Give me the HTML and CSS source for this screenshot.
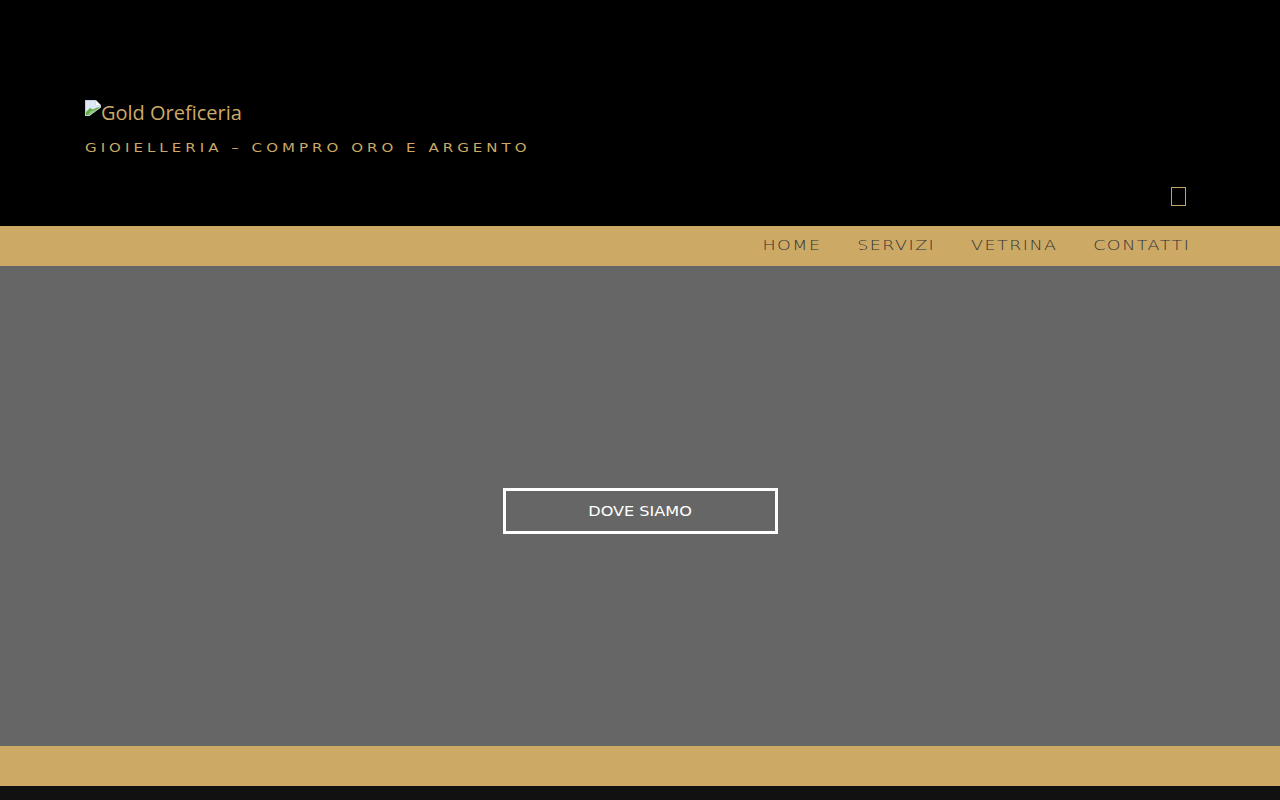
FILE: index.html
```html
<!DOCTYPE html>
<html lang="it">
<head>
<meta charset="utf-8">
<title>Gold Oreficeria</title>
<link rel="stylesheet" href="styles.css">
</head>
<body>
<header class="masthead">
  <div class="brand">
    <a class="logo" href="#">
      <svg class="broken-icon" width="16" height="16" viewBox="0 0 16 16" aria-hidden="true">
        <path d="M0 0H11L16 5V7.500L4.500 16H0Z" fill="#c3cbd8"/>
        <path d="M1 1H10.500V5.500H15V7L4 15H1Z" fill="#dfe8f8"/>
        <path d="M11 1L15 5H11Z" fill="#fff"/>
        <path d="M1 15V12L5 8L8 9.500L12 7.500L15 7L4 15Z" fill="#62ab48"/>
        <path d="M3 15L6 10.500L9 10.500L13 8.500L4 15Z" fill="#8fca76"/>
      </svg><span class="logo-text">Gold Oreficeria</span>
    </a>
    <p class="tagline">GIOIELLERIA – COMPRO ORO E ARGENTO</p>
  </div>
  <div class="tools"><span class="missing-glyph"></span></div>
</header>
<nav class="menu">
  <div class="menu-items">
    <a href="#">HOME</a>
    <a href="#">SERVIZI</a>
    <a href="#">VETRINA</a>
    <a href="#">CONTATTI</a>
  </div>
</nav>
<main class="hero">
  <a class="cta" href="#"><span class="cta-label">DOVE SIAMO</span></a>
</main>
<div class="strip"></div>
<footer class="foot"></footer>
</body>
</html>
```
FILE: styles.css
```css
* { box-sizing: border-box; }
html, body { margin: 0; padding: 0; }
body {
  background: #111;
  font-family: "DejaVu Sans", sans-serif;
  height: 800px;
  overflow: hidden;
}
a { text-decoration: none; color: inherit; }
.masthead {
  height: 226px;
  background: #000;
  padding: 100px 90px 0 85px;
  display: flex;
  flex-direction: column;
}
.logo {
  display: flex;
  align-items: flex-start;
  color: #ccaa66;
  font-family: "Open Sans", sans-serif;
  font-size: 20px;
  line-height: 25px;
}
.broken-icon { flex: none; }
.tagline {
  width: max-content;
  margin: 15px 0 0;
  color: #ccaa66;
  font-size: 12px;
  line-height: 16px;
  letter-spacing: 3.23px;
  white-space: nowrap;
  transform: scaleX(1.25);
  transform-origin: left center;
}
.tools {
  margin-top: 31px;
  display: flex;
  justify-content: flex-end;
  padding-right: 4px;
}
.missing-glyph {
  width: 15px;
  height: 19px;
  border: 1px solid #c0a468;
}
.menu {
  height: 40px;
  background: #ccaa66;
  display: flex;
  justify-content: flex-end;
  align-items: center;
  padding-right: 89.5px;
  padding-bottom: 3px;
}
.menu-items {
  display: flex;
  gap: 28.5px;
  color: #333;
  font-size: 14px;
  font-weight: 200;
  letter-spacing: 1.2px;
  transform: scaleX(1.25);
  transform-origin: right center;
}
.hero {
  height: 480px;
  background: #666;
  display: flex;
  align-items: center;
  justify-content: center;
  padding-top: 10px;
}
.cta {
  width: 275px;
  height: 46px;
  border: 3px solid #fff;
  display: flex;
  align-items: center;
  justify-content: center;
  color: #fff;
  font-size: 14px;
}
.cta-label { transform: scaleX(1.15); }
.strip { height: 40px; background: #ccaa66; }
.foot { height: 14px; background: #111; }
```
